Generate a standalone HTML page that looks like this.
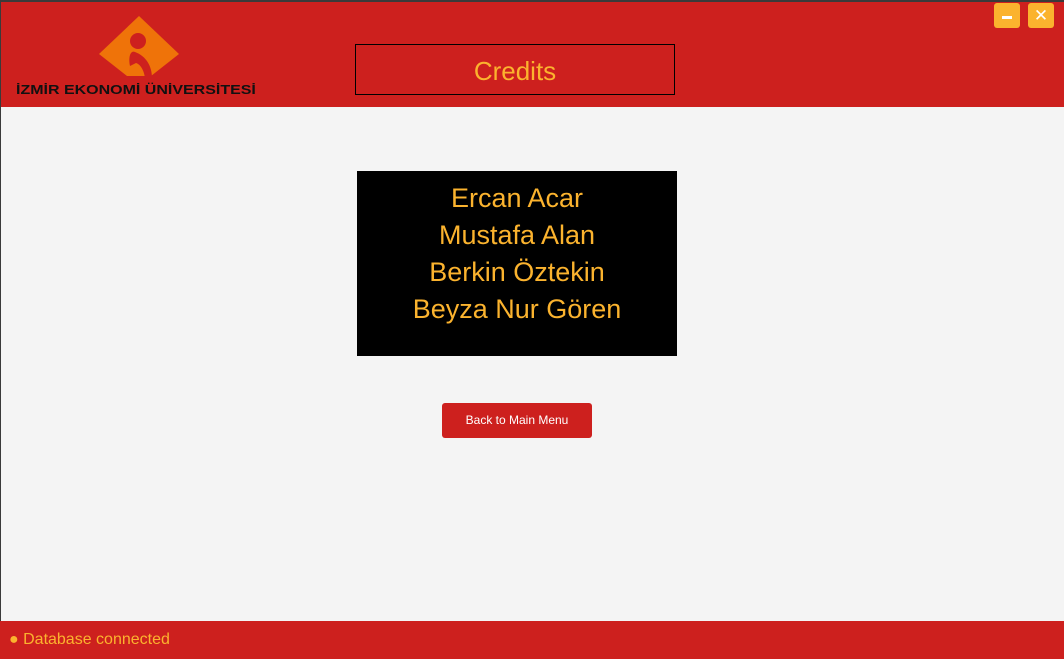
<!DOCTYPE html>
<html><head><style>
*{margin:0;padding:0;box-sizing:border-box}
body{width:1064px;height:659px;overflow:hidden;background:#f4f4f4;font-family:"Liberation Sans","DejaVu Sans",sans-serif;position:relative}
#top{position:absolute;left:0;top:0;width:1064px;height:2px;background:#3a3a3a}
#hdr{position:absolute;left:0;top:2px;width:1064px;height:105px;background:#cd201e}
#lb{position:absolute;left:0;top:0;width:1px;height:659px;background:#3a3a3a}
.wb{position:absolute;top:3px;width:26px;height:25px;background:#fbb32e;border-radius:3px}
#title{position:absolute;left:355px;top:44px;width:320px;height:51px;border:1px solid #000;color:#fbb32e;font-size:26px;text-align:center;line-height:52px}
#names{position:absolute;left:357px;top:171px;width:320px;height:185px;background:#000;color:#fbb32e;font-size:27px;text-align:center;padding-top:9px;line-height:37px}
#btn{position:absolute;left:442px;top:403px;width:150px;height:35px;background:#cd201e;border-radius:3px;color:#fff;font-size:12px;text-align:center;line-height:35px}
#ftr{position:absolute;left:0;top:621px;width:1064px;height:38px;background:#cd201e;color:#fbb32e;font-size:16px;line-height:38px;padding-left:9px}
#logo-t{position:absolute;left:16px;top:82px;font-size:13px;font-weight:bold;color:#111;white-space:nowrap;transform-origin:0 0;transform:scale(1.23,1)}
</style></head><body>
<div id="top"></div>
<div id="hdr"></div>
<div id="lb"></div>
<svg style="position:absolute;left:95px;top:14px" width="90" height="68" viewBox="95 14 90 68">
<polygon points="139,16 179,54 151,76 127,76 99,54" fill="#ef7309"/>
<circle cx="138" cy="41" r="8" fill="#cd201e"/>
<path d="M130,66 C128,56 131,50 135,52 C146,56 152,66 152,78 L145,78 C144,70 140,64 136,63 Z" fill="#cd201e"/>
</svg>
<div id="logo-t">İZMİR EKONOMİ ÜNİVERSİTESİ</div>
<div class="wb" style="left:994px"><div style="position:absolute;left:8px;top:13px;width:10px;height:3px;background:#fff"></div></div>
<div class="wb" style="left:1028px;color:#fff;font-weight:bold;font-size:17px;text-align:center;line-height:25px">✕</div>
<div id="title">Credits</div>
<div id="names">Ercan Acar<br>Mustafa Alan<br>Berkin Öztekin<br>Beyza Nur Gören</div>
<div id="btn">Back to Main Menu</div>
<div id="ftr">● Database connected</div>
</body></html>
